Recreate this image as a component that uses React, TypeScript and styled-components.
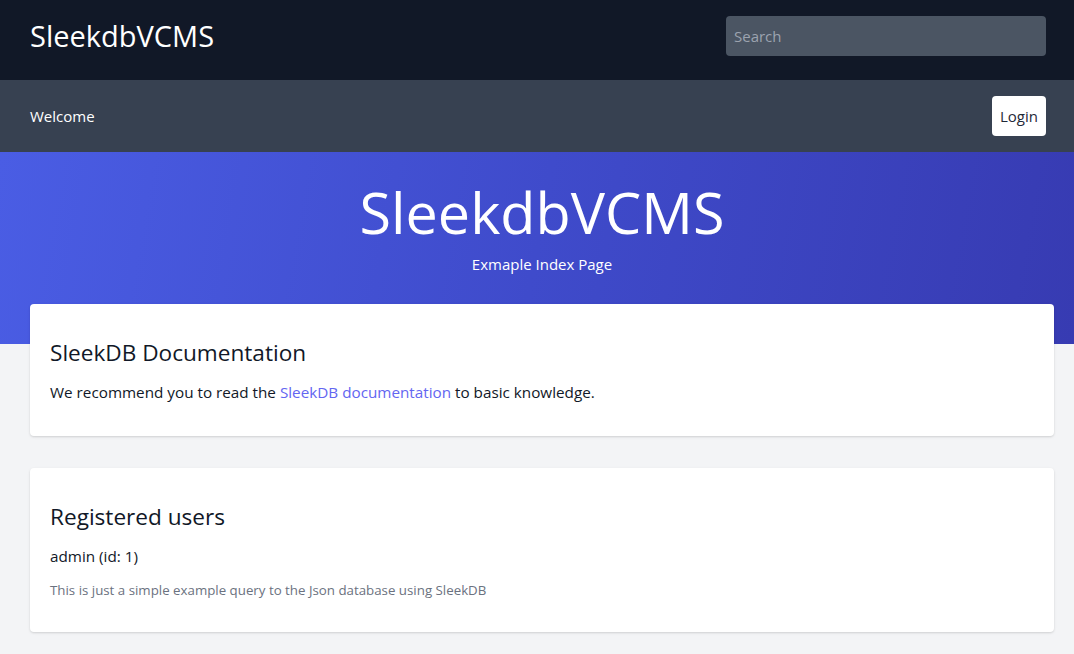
import { FC } from 'react'
import styled, { createGlobalStyle } from 'styled-components'

const GlobalStyle = createGlobalStyle`
  * { box-sizing: border-box; }
  html, body {
    margin: 0;
    padding: 0;
    background: #f3f4f6;
    font-family: 'Open Sans', 'Noto Sans', Arial, sans-serif;
    color: #111827;
  }
`

const Page = styled.div`
  min-height: 654px;
  background: #f3f4f6;
`

const TopBar = styled.header`
  height: 80px;
  background: #111827;
  display: flex;
  align-items: center;
  justify-content: space-between;
  padding: 0 28px 8px 30px;
`

const Brand = styled.div`
  color: #fff;
  font-size: 29px;
  line-height: 36px;
`

const Search = styled.input`
  width: 320px;
  height: 40px;
  border: none;
  border-radius: 4px;
  background: #4b5563;
  color: #fff;
  font: inherit;
  font-size: 15px;
  padding: 0 8px;
  outline: none;

  &::placeholder {
    color: #9ca3af;
  }
`

const NavBar = styled.nav`
  height: 72px;
  background: #374151;
  display: flex;
  align-items: center;
  justify-content: space-between;
  padding: 0 28px 0 30px;
`

const NavLink = styled.a`
  color: #fff;
  font-size: 15px;
  text-decoration: none;
`

const LoginButton = styled.button`
  height: 40px;
  padding: 0 8px;
  border: none;
  border-radius: 4px;
  background: #fff;
  color: #1f2937;
  font: inherit;
  font-size: 15px;
`

const Hero = styled.section`
  height: 192px;
  background: linear-gradient(100deg, #4a5de4 0%, #3f4bcb 50%, #373bb2 100%);
  color: #fff;
  text-align: center;
  padding: 28px 0 0 10px;
`

const HeroTitle = styled.h1`
  margin: 0;
  font-weight: 400;
  font-size: 57.5px;
  line-height: 64px;
`

const HeroSub = styled.p`
  margin: 9px 0 0;
  font-size: 15px;
  line-height: 22px;
`

const Cards = styled.main`
  margin-top: -40px;
  padding: 0 20px 22px 30px;
  display: flex;
  flex-direction: column;
  gap: 32px;
`

const Card = styled.section`
  background: #fff;
  border-radius: 4px;
  box-shadow: 0 1px 3px rgba(0, 0, 0, 0.1), 0 1px 2px rgba(0, 0, 0, 0.06);
  padding: 33px 20px 32px;
`

const CardTitle = styled.h2`
  margin: 0;
  font-weight: 400;
  font-size: 22.6px;
  line-height: 32px;
  color: #111827;
`

const Text = styled.p`
  margin: 11px 0 0;
  font-size: 15.25px;
  line-height: 24px;
`

const Note = styled.p`
  margin: 12px 0 0;
  font-size: 13.3px;
  line-height: 20px;
  color: #6b7280;
`

const DocLink = styled.a`
  color: #6366f1;
  text-decoration: none;
`

const App: FC = () => (
  <Page>
    <GlobalStyle />
    <TopBar>
      <Brand>SleekdbVCMS</Brand>
      <Search placeholder="Search" />
    </TopBar>
    <NavBar>
      <NavLink href="#">Welcome</NavLink>
      <LoginButton>Login</LoginButton>
    </NavBar>
    <Hero>
      <HeroTitle>SleekdbVCMS</HeroTitle>
      <HeroSub>Exmaple Index Page</HeroSub>
    </Hero>
    <Cards>
      <Card>
        <CardTitle>SleekDB Documentation</CardTitle>
        <Text>
          We recommend you to read the <DocLink href="#">SleekDB documentation</DocLink> to basic knowledge.
        </Text>
      </Card>
      <Card>
        <CardTitle>Registered users</CardTitle>
        <Text>admin (id: 1)</Text>
        <Note>This is just a simple example query to the Json database using SleekDB</Note>
      </Card>
    </Cards>
  </Page>
)

export default App
